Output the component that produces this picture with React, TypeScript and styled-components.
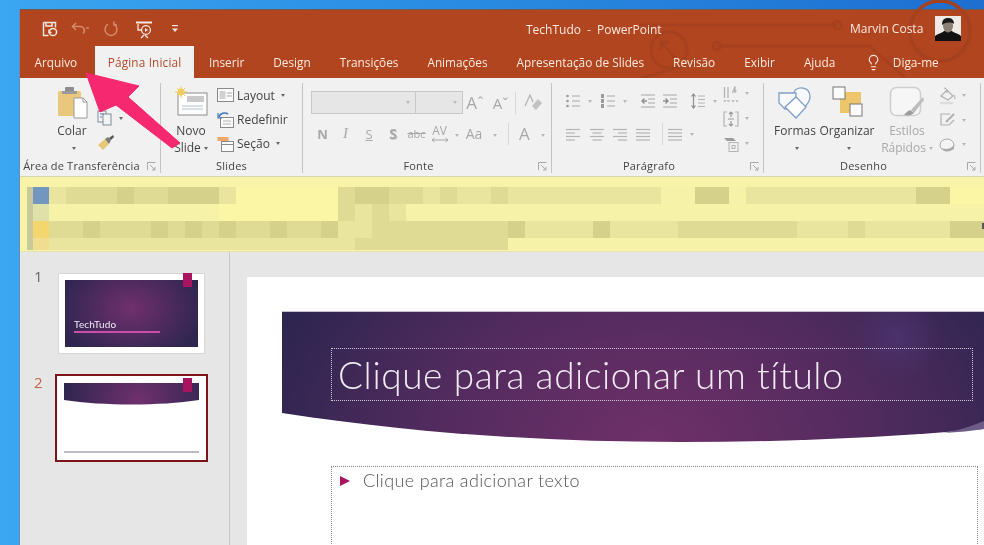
import React from 'react'
import styled, { createGlobalStyle } from 'styled-components'
import { Lightbulb } from 'lucide-react'

const GlobalStyle = createGlobalStyle`
  html, body {
    margin: 0;
    width: 984px;
    height: 545px;
    overflow: hidden;
    background: #3ba6f1;
  }
  * { box-sizing: border-box; }
`

const Desktop = styled.div`
  position: relative;
  width: 984px;
  height: 545px;
  padding: 10px 0 0 20px;
  overflow: hidden;
  background: linear-gradient(90deg, #3ba6f1 0, #2b8fe4 40%, #1e6fd0 100%);
  font-family: 'Open Sans', 'Noto Sans', sans-serif;
  filter: blur(0.5px);
`

const Window = styled.div`
  width: 964px;
  height: 535px;
  display: flex;
  flex-direction: column;
  background: #e6e6e6;
  box-shadow: 0 -1px 0 #6d5a55, -1px 0 0 #5f8fb5;
`

const Band = styled.div`
  position: relative;
  height: 68px;
  background: #b1451f;
  color: #fbe9e0;
`

const Circuit = styled.svg`
  position: absolute;
  left: -20px;
  top: -10px;
  pointer-events: none;
`

const TitleRow = styled.div`
  position: relative;
  height: 36px;
  display: flex;
  align-items: center;
  padding: 2px 0 0 22px;
`

const Qat = styled.div`
  display: flex;
  align-items: center;
  gap: 9px;
  width: 484px;
`

const WindowTitle = styled.div`
  font-size: 12px;
  word-spacing: 3px;
  width: 324px;
  white-space: nowrap;
`

const UserName = styled.div`
  font-size: 12px;
  margin-top: -2px;
  width: 85px;
  white-space: nowrap;
`

const Avatar = styled.svg`
  margin-top: -2px;
`

const TabRow = styled.div`
  position: relative;
  height: 32px;
  display: flex;
  align-items: stretch;
`

const Tab = styled.div<{ $active?: boolean }>`
  display: flex;
  align-items: center;
  justify-content: center;
  font-size: 11.8px;
  white-space: nowrap;
  padding: 0 ${p => (p.$active ? '13px' : '14.5px')};
  margin-left: ${p => (p.$active ? '3px' : '0')};
  background: ${p => (p.$active ? '#f1f1f1' : 'transparent')};
  color: ${p => (p.$active ? '#b5492a' : 'inherit')};
  letter-spacing: ${p => (p.$active ? '0.15px' : '0')};
`

const Tell = styled.div`
  display: flex;
  align-items: center;
  gap: 11px;
  font-size: 11.8px;
  margin-left: 15px;
`

const Ribbon = styled.div`
  height: 99px;
  display: flex;
  background: #f1f1f1;
  border-bottom: 1px solid #d8d5b4;
`

const Group = styled.div<{ $width: number }>`
  position: relative;
  width: ${p => p.$width}px;
  margin: 5px 0 3px;
  display: flex;
  flex-direction: column;
  border-right: 1px solid #c4c4c4;
`

const GroupBody = styled.div<{ $left: number }>`
  flex: 1;
  display: flex;
  padding-left: ${p => p.$left}px;
  min-height: 0;
`

const GroupLabel = styled.div<{ $launcher?: boolean }>`
  height: 15px;
  line-height: 15px;
  text-align: center;
  padding-right: ${p => (p.$launcher ? 17 : 0)}px;
  font-size: 11px;
  color: #444;
  letter-spacing: 0.2px;
  white-space: nowrap;
`

const Launcher = styled.svg`
  position: absolute;
  right: 4px;
  bottom: 2px;
`

const BigButton = styled.div<{ $width: number; $muted?: boolean }>`
  width: ${p => p.$width}px;
  display: flex;
  flex-direction: column;
  align-items: center;
  font-size: 12px;
  color: ${p => (p.$muted ? '#a9a9a9' : '#444')};
`

const BigIcon = styled.div`
  height: 39px;
  padding-top: 3px;
  display: flex;
  justify-content: center;
`

const BigText = styled.div`
  height: 17px;
  line-height: 17px;
  white-space: nowrap;
`

const Caret = styled.span<{ $muted?: boolean }>`
  display: inline-block;
  width: 0;
  height: 0;
  margin-left: 3px;
  vertical-align: middle;
  border-left: 2.5px solid transparent;
  border-right: 2.5px solid transparent;
  border-top: 3px solid ${p => (p.$muted ? '#b8b8b8' : '#666')};
`

const SmallColumn = styled.div<{ $top?: number; $left?: number }>`
  display: flex;
  flex-direction: column;
  margin-top: ${p => p.$top ?? 0}px;
  margin-left: ${p => p.$left ?? 0}px;
`

const SmallItem = styled.div<{ $height?: number }>`
  height: ${p => p.$height ?? 24}px;
  display: flex;
  align-items: center;
  gap: 3px;
  font-size: 12px;
  color: #444;
  white-space: nowrap;
`

const FontColumn = styled.div`
  display: flex;
  flex-direction: column;
  padding-top: 8px;
`

const FontRow = styled.div<{ $gap?: number }>`
  height: 23px;
  display: flex;
  align-items: center;
  margin-bottom: ${p => p.$gap ?? 0}px;
`

const Combo = styled.div<{ $width: number }>`
  width: ${p => p.$width}px;
  height: 23px;
  margin-right: -1px;
  background: #e6e6e6;
  border: 1px solid #c8c8c8;
  display: flex;
  align-items: center;
  justify-content: flex-end;
  padding-right: 5px;
`

const Glyph = styled.span<{
  $w: number
  $size?: number
  $bold?: boolean
  $italic?: boolean
  $under?: boolean
  $strike?: boolean
  $shadow?: boolean
}>`
  width: ${p => p.$w}px;
  flex: none;
  text-align: center;
  font-size: ${p => p.$size ?? 13}px;
  font-weight: ${p => (p.$bold ? 700 : 400)};
  font-style: ${p => (p.$italic ? 'italic' : 'normal')};
  text-decoration: ${p => (p.$under ? 'underline' : p.$strike ? 'line-through' : 'none')};
  text-shadow: ${p => (p.$shadow ? '1px 1px 0 #cfcfcf' : 'none')};
  font-family: ${p => (p.$italic ? "'Liberation Serif', serif" : 'inherit')};
  color: #a8a8a8;
  white-space: nowrap;
`

const Kerning = styled.span`
  width: 23px;
  flex: none;
  display: flex;
  flex-direction: column;
  align-items: center;
  font-size: 12px;
  line-height: 12px;
  color: #a8a8a8;
`

const Sep = styled.span<{ $w: number; $left?: number }>`
  width: ${p => p.$w}px;
  margin-left: ${p => p.$left ?? 0}px;
  flex: none;
  height: 22px;
  display: flex;
  justify-content: center;
  &::before {
    content: '';
    width: 1px;
    background: #d8d8d8;
  }
`

const ClearFormat = styled.svg`
  margin-left: 7px;
`

const ParaColumn = styled.div`
  width: 158px;
  display: flex;
  flex-direction: column;
  padding-top: 9px;
`

const ParaRow = styled.div<{ $gap?: number }>`
  height: 18px;
  display: flex;
  align-items: center;
  margin-bottom: ${p => p.$gap ?? 0}px;
`

const ParaItem = styled.div<{ $w: number }>`
  width: ${p => p.$w}px;
  flex: none;
  display: flex;
  align-items: center;
  gap: 4px;
`

const YellowBar = styled.div`
  position: relative;
  height: 75px;
  padding: 10px 0 0 7px;
  display: flex;
  background: #f8f3a6;
  border-bottom: 1px solid #e6e2b4;
`

const Strip = styled.div`
  width: 7px;
  height: 63px;
  background: #c9ca9b;
`

const Swatches = styled.div`
  width: 18px;
  display: flex;
  flex-direction: column;
`

const Swatch = styled.div<{ $color: string; $height: number }>`
  height: ${p => p.$height}px;
  background: ${p => p.$color};
`

const Mosaic = styled.div`
  display: grid;
  grid-template-columns: repeat(55, 17px);
  grid-template-rows: 17px 17px 17px 12px;
`

const EdgeMark = styled.div`
  position: absolute;
  right: 0;
  top: 46px;
  width: 2px;
  height: 6px;
  background: #555;
`

const shades: Record<string, string> = {
  a: '#fbf6a6',
  b: '#f6f2a8',
  c: '#e9e59e',
  d: '#dfdb95',
  e: '#d5d18b'
}

const Cell = styled.div<{ $shade: string }>`
  background: ${p => shades[p.$shade]};
`

const Workspace = styled.div`
  flex: 1;
  display: flex;
  min-height: 0;
`

const ThumbPane = styled.div`
  width: 210px;
  flex: none;
  padding: 21px 0 0 14px;
  display: flex;
  flex-direction: column;
  gap: 20px;
  background: #e6e6e6;
  border-right: 1px solid #c8c8c8;
`

const ThumbRow = styled.div`
  display: flex;
  align-items: flex-start;
`

const ThumbNumber = styled.div<{ $active?: boolean }>`
  width: ${p => (p.$active ? 21 : 24)}px;
  margin-top: ${p => (p.$active ? 0 : -5)}px;
  font-size: 15px;
  line-height: 16px;
  color: ${p => (p.$active ? '#c4634a' : '#666')};
`

const Thumb = styled.div`
  position: relative;
  width: 147px;
  height: 81px;
  padding: 6px;
  background: #fff;
  border: 1px solid #d6d6d6;
`

const ThumbActive = styled.div`
  position: relative;
  width: 153px;
  height: 88px;
  padding: 7px;
  background: #fff;
  border: 2px solid #7b1518;
  display: flex;
  flex-direction: column;
  justify-content: space-between;
`

const Mark = styled.div<{ $right: number; $top: number }>`
  position: absolute;
  right: ${p => p.$right}px;
  top: ${p => p.$top}px;
  width: 9px;
  height: 14px;
  background: #a8145f;
`

const TitleSlideArt = styled.div`
  height: 100%;
  padding: 39px 0 0 9px;
  background: radial-gradient(ellipse 55% 80% at 50% 42%, #70306d 0, #4c2a5e 55%, #2f2650 100%);
  color: #efe9f2;
`

const TitleSlideName = styled.div`
  font-family: Lato, sans-serif;
  font-size: 10px;
  line-height: 11px;
  letter-spacing: 0.2px;
`

const TitleSlideLine = styled.div`
  width: 86px;
  height: 2px;
  margin-top: 1px;
  background: #c94fa6;
`

const ThumbBannerArt = styled.svg`
  display: block;
`

const FooterLine = styled.div`
  height: 2px;
  background: #bdb9c0;
`

const SlideArea = styled.div`
  flex: 1;
  padding: 25px 0 0 17px;
  overflow: hidden;
  background: #e6e6e6;
`

const Slide = styled.div`
  width: 737px;
  height: 268px;
  padding: 34px 0 0 35px;
  background: #fff;
`

const Banner = styled.div`
  position: relative;
  width: 702px;
  height: 132px;
`

const BannerArt = styled.svg`
  display: block;
`

const TitlePlaceholder = styled.div`
  position: absolute;
  left: 49px;
  top: 37px;
  width: 642px;
  height: 53px;
  padding-left: 6px;
  display: flex;
  align-items: center;
  border: 1px dotted #cfc8d6;
  color: #f0ebf2;
  font-family: Lato, sans-serif;
  font-weight: 300;
  font-size: 37px;
  letter-spacing: 0.6px;
  white-space: nowrap;
`

const BodyPlaceholder = styled.div`
  width: 647px;
  height: 100px;
  margin: 23px 0 0 49px;
  padding: 3px 0 0 8px;
  display: flex;
  align-items: flex-start;
  gap: 13px;
  border: 1px dotted #8a8a8a;
  border-bottom: none;
  color: #555;
  font-family: Lato, sans-serif;
  font-size: 18px;
  line-height: 21px;
  letter-spacing: 0.35px;
  font-weight: 300;
`

const Bullet = styled.span`
  width: 0;
  height: 0;
  margin-top: 6px;
  border-top: 5.5px solid transparent;
  border-bottom: 5.5px solid transparent;
  border-left: 10px solid #a8145f;
`

const Pointer = styled.svg`
  position: absolute;
  left: 0;
  top: 0;
  pointer-events: none;
`

const ICON_GREY = '#b4b4b4'

function LinesIcon({ kind }: { kind: 'left' | 'center' | 'right' | 'justify' }) {
  const rows = [0, 1, 2, 3].map(i => {
    const short = i % 2 === 1 && kind !== 'justify'
    const w = short ? 9 : 14
    const x = kind === 'right' ? 15 - w : kind === 'center' ? 8 - w / 2 : 1
    return <line key={i} x1={x} x2={x + w} y1={3.5 + i * 3.5} y2={3.5 + i * 3.5} />
  })
  return (
    <svg width="16" height="16" stroke={ICON_GREY} strokeWidth="1.2">
      {rows}
    </svg>
  )
}

function ListIcon({ numbered }: { numbered?: boolean }) {
  return (
    <svg width="16" height="16" stroke={ICON_GREY} strokeWidth="1.2" fill="#9a9a9a">
      {[3, 8, 13].map(y => (
        <g key={y}>
          {numbered ? <rect x="1" y={y - 2} width="3" height="4" stroke="none" /> : <circle cx="2.5" cy={y} r="1.3" stroke="none" />}
          <line x1="7" x2="15" y1={y} y2={y} />
        </g>
      ))}
    </svg>
  )
}

function IndentIcon({ out }: { out?: boolean }) {
  return (
    <svg width="16" height="16" stroke={ICON_GREY} strokeWidth="1.2" fill="none">
      <line x1="1" x2="15" y1="2" y2="2" />
      <line x1="8" x2="15" y1="6" y2="6" />
      <line x1="8" x2="15" y1="10" y2="10" />
      <line x1="1" x2="15" y1="14" y2="14" />
      <path d={out ? 'M7 8H2M4.5 5.5L2 8l2.5 2.5' : 'M1 8h5M3.5 5.5L6 8l-2.5 2.5'} stroke="#8f8f8f" strokeWidth="1.4" />
    </svg>
  )
}

function SpacingIcon() {
  return (
    <svg width="16" height="18" stroke={ICON_GREY} strokeWidth="1.2" fill="none">
      <path d="M3.5 2v14M1.5 4.5l2-2.5 2 2.5M1.5 13.5l2 2.5 2-2.5" stroke="#8f8f8f" />
      <path d="M8 4h7M8 7.5h7M8 11h7M8 14.5h7" />
    </svg>
  )
}

function TextDirectionIcon() {
  return (
    <svg width="16" height="18" stroke={ICON_GREY} strokeWidth="1.3" fill="none">
      <path d="M1.5 2v11M5 2v11M12 8V1.5L9.5 8M10 6h3.5" />
      <path d="M1 15l1 2 1-2M4.5 15l1 2 1-2M9 15l1 2 1-2M13 15l1 2 1-2" strokeWidth="1" />
    </svg>
  )
}

function AlignTextIcon() {
  return (
    <svg width="16" height="18" stroke={ICON_GREY} strokeWidth="1.2" fill="none">
      <path d="M4 2H1v14h3M12 2h3v14h-3" />
      <path d="M8 2v5M6 4l2-2 2 2M8 16v-5M6 14l2 2 2-2M5 9h6" stroke="#9a9a9a" />
    </svg>
  )
}

function SmartArtIcon() {
  return (
    <svg width="16" height="18" fill="none" stroke={ICON_GREY}>
      <path d="M1 3h9l3 3H4z" fill="#9c9c9c" stroke="none" />
      <rect x="6" y="7.5" width="9" height="9" fill="#f1f1f1" />
      <rect x="9" y="10.5" width="3" height="3" />
    </svg>
  )
}

function PasteIcon() {
  return (
    <svg width="34" height="34">
      <rect x="3" y="5" width="23" height="25" rx="1.5" fill="#e9c87e" />
      <rect x="10" y="1" width="9" height="5" rx="1" fill="#8d8d8d" />
      <rect x="7" y="5" width="15" height="3" fill="#9a9a9a" />
      <path d="M19 12h9l4 4v16H19z" fill="#fff" stroke="#9a9a9a" />
      <path d="M28 12v4h4" fill="none" stroke="#9a9a9a" />
    </svg>
  )
}

function CopyIcon() {
  return (
    <svg width="16" height="16" fill="#f4f4f4" stroke="#7f8b9c">
      <rect x="1" y="1" width="8" height="11" />
      <rect x="6" y="4" width="8" height="11" />
      <path d="M3 4h4M3 7h2" stroke="#5a7ab0" />
    </svg>
  )
}

function BrushIcon() {
  return (
    <svg width="18" height="18">
      <path d="M1 12l7-6 4 5-6 6z" fill="#e8c878" />
      <path d="M8 6l3-2 3 3-2 4z" fill="#7a7a7a" />
      <path d="M12 5l4-3 1 2-3 3z" fill="#555" />
    </svg>
  )
}

function NewSlideIcon() {
  return (
    <svg width="33" height="30">
      <rect x="3" y="7" width="29" height="22" fill="#fdfdfd" stroke="#8d8d8d" />
      <rect x="12" y="10" width="17" height="6" fill="#c9c9c9" />
      <path d="M7 20h21M7 23h21" stroke="#b9c3cf" />
      <circle cx="6" cy="6" r="3.5" fill="#f2d266" />
      <path d="M6 0v12M0 6h12M2 2l8 8M10 2l-8 8" stroke="#efc95a" />
    </svg>
  )
}

function LayoutIcon() {
  return (
    <svg width="17" height="16" fill="none" stroke="#8a8a8a">
      <rect x="0.5" y="1.5" width="16" height="13" fill="#fafafa" />
      <rect x="2.5" y="4" width="6" height="8" fill="#d2d2d2" stroke="none" />
      <path d="M10 6h5M10 9h5" stroke="#a9a9a9" />
    </svg>
  )
}

function ResetIcon() {
  return (
    <svg width="17" height="17" fill="none" stroke="#8a8a8a">
      <rect x="3.5" y="6.5" width="13" height="10" fill="#fafafa" />
      <path d="M6 10h8M6 13h8" stroke="#b5b5b5" />
      <path d="M2 6c1-4 6-5 9-3" stroke="#3f79bd" strokeWidth="1.6" />
      <path d="M1 2v5h4" stroke="#3f79bd" strokeWidth="1.2" />
    </svg>
  )
}

function SectionIcon() {
  return (
    <svg width="17" height="17" fill="none">
      <rect x="0.5" y="2" width="11" height="4" fill="#f0a76a" />
      <rect x="4.5" y="6.5" width="12" height="10" fill="#fafafa" stroke="#8a8a8a" />
      <path d="M4.5 9.5h12" stroke="#8a8a8a" />
    </svg>
  )
}

function ShapesIcon() {
  return (
    <svg width="36" height="34" fill="#fdfdfd" stroke="#7f9fc4" strokeWidth="1.3">
      <path d="M17 6C20 0 33 0 33 11c0 6-6 11-10 15" fill="#f6f8fb" />
      <path d="M2 7h17v16H8l-6-6z" fill="#f6f8fb" />
      <path d="M19 11l10 10-10 11-11-11z" />
    </svg>
  )
}

function ArrangeIcon() {
  return (
    <svg width="31" height="31">
      <rect x="8" y="6" width="21" height="21" fill="#edc56b" />
      <rect x="1" y="1" width="12" height="12" fill="#fbfbfb" stroke="#777" />
      <rect x="18" y="18" width="12" height="12" fill="#fbfbfb" stroke="#777" />
    </svg>
  )
}

function QuickStyleIcon() {
  return (
    <svg width="36" height="32" fill="none">
      <rect x="1.5" y="1.5" width="30" height="28" rx="6" fill="#f6f6f6" stroke="#cfcfcf" strokeWidth="1.6" />
      <path d="M34 11L22 24l3 3 10-13z" fill="#bdbdbd" />
      <path d="M21 24c-3 1-4 3-6 5 4 1 8 0 10-2z" fill="#9d9d9d" />
    </svg>
  )
}

function FillIcon() {
  return (
    <svg width="17" height="18" fill="none" stroke="#b0b0b0" strokeWidth="1.2">
      <path d="M2 9l6-6 6 6-5 4z" />
      <path d="M5 1c2 0 3 2 3 5" />
      <path d="M15 8c1 2 1.5 3 .5 4" stroke="#c6c6c6" strokeWidth="1.6" />
      <path d="M1 16h13" stroke="#dcdcdc" strokeWidth="2.5" />
    </svg>
  )
}

function OutlineIcon() {
  return (
    <svg width="17" height="16" fill="none" stroke="#b0b0b0" strokeWidth="1.2">
      <path d="M11 2H2v11h8l5-5" />
      <path d="M7 10l8-8" strokeWidth="2" />
    </svg>
  )
}

function EffectIcon() {
  return (
    <svg width="17" height="14">
      <ellipse cx="8" cy="7" rx="7" ry="6" fill="#f4f4f4" stroke="#a9a9a9" />
      <path d="M3 10c4 2 9 1 12-3v4l-4 2H6z" fill="#a9a9a9" />
    </svg>
  )
}

function LauncherMark() {
  return (
    <Launcher width="9" height="9" fill="none" stroke="#a8a8a8">
      <path d="M0.5 8V0.5H8.5" />
      <path d="M3 3l5 5M5 8h3V5" />
    </Launcher>
  )
}

function QatIcons() {
  return (
    <Qat>
      <svg width="16" height="16" fill="none" stroke="#f7e6de" strokeWidth="1.5">
        <path d="M1.5 1.5h12v5M1.5 1.5v13h5" />
        <path d="M4 2v3h6V2" />
        <circle cx="11" cy="11" r="3.6" />
        <path d="M7 8.5v3h2.5" />
      </svg>
      <svg width="18" height="14" fill="none" stroke="#d38a6e" strokeWidth="1.5" style={{ marginLeft: 4 }}>
        <path d="M5 1L1.5 4.5 5 8M2 4.5h7a4 4 0 0 1 3 7" />
        <path d="M15 6h3" />
      </svg>
      <svg width="16" height="16" fill="none" stroke="#d38a6e" strokeWidth="1.5" style={{ marginLeft: 5 }}>
        <path d="M11 3.2a6 6 0 1 1-6 0" />
        <path d="M11 0.5v3.5h3" />
      </svg>
      <svg width="19" height="19" fill="none" stroke="#f7e6de" strokeWidth="1.3" style={{ marginLeft: 7 }}>
        <path d="M1 2.5h16" strokeWidth="2" />
        <path d="M3 4v6h4M9 15l-3 3M10 15l3 3" />
        <circle cx="11" cy="10" r="4.4" />
        <path d="M10 8l3 2-3 2z" fill="#f7e6de" stroke="none" />
      </svg>
      <svg width="7" height="8" fill="#f7e6de" style={{ marginLeft: 9 }}>
        <rect x="0" y="0" width="6" height="1.2" />
        <path d="M0 3.5h6L3 7z" />
      </svg>
    </Qat>
  )
}

const mosaicRows = [
  'cdddeddeeecaaaaaadeeddcdccdcccccccccbbeebcccccccccceeaaaa',
  'bbbbbbbbbbaaaaaaadcdcbbbbbbbbbbbbbbbbbbbbbbbbbbbbbbbbbbb',
  'ddedddedededdeddeccddddddddecccceccccdddddddcccdccccceeec',
  'ccccccccccccccccccdddddddddbbbbbbbbbbbbbbbbbbbbbbbbbbbbb'
]

const tabs = ['Inserir', 'Design', 'Transições', 'Animações', 'Apresentação de Slides', 'Revisão', 'Exibir', 'Ajuda']

export default function App() {
  return (
    <Desktop>
      <GlobalStyle />
      <Window>
        <Band>
          <Circuit width="984" height="78" fill="none" stroke="#a5411e" strokeWidth="2.5">
            <path d="M640 25H837M717 46H870L905 78M690 65L640 78" />
            <circle cx="837" cy="25" r="4" />
            <circle cx="717" cy="46" r="4" />
            <circle cx="669" cy="50" r="18" strokeWidth="3" />
            <path d="M675 58L661 42M661 50v-8h8" />
            <circle cx="940" cy="31" r="30" strokeWidth="3.5" />
          </Circuit>
          <TitleRow>
            <QatIcons />
            <WindowTitle>TechTudo - PowerPoint</WindowTitle>
            <UserName>Marvin Costa</UserName>
            <Avatar width="26" height="25">
              <rect width="26" height="25" fill="#eeeae6" />
              <path d="M0 25v-5c4-3 7-3 9-5h8c2 2 6 2 9 5v5z" fill="#111" />
              <ellipse cx="13" cy="10" rx="5" ry="6.5" fill="#8c7f76" />
              <path d="M7 9c0-6 3-7 6-7s6 1 6 6c-3-2-8-2-12 1z" fill="#1a1a1a" />
            </Avatar>
          </TitleRow>
          <TabRow>
            <Tab>Arquivo</Tab>
            <Tab $active>Página Inicial</Tab>
            {tabs.map(name => (
              <Tab key={name}>{name}</Tab>
            ))}
            <Tell>
              <Lightbulb size={17} strokeWidth={1.6} />
              Diga-me
            </Tell>
          </TabRow>
        </Band>

        <Ribbon>
          <Group $width={141}>
            <GroupBody $left={32}>
              <BigButton $width={40}>
                <BigIcon>
                  <PasteIcon />
                </BigIcon>
                <BigText>Colar</BigText>
                <BigText>
                  <Caret />
                </BigText>
              </BigButton>
              <SmallColumn $top={23} $left={5}>
                <SmallItem>
                  <CopyIcon />
                  <Caret />
                </SmallItem>
                <SmallItem>
                  <BrushIcon />
                </SmallItem>
              </SmallColumn>
            </GroupBody>
            <GroupLabel $launcher>Área de Transferência</GroupLabel>
            <LauncherMark />
          </Group>

          <Group $width={142}>
            <GroupBody $left={7}>
              <BigButton $width={46}>
                <BigIcon>
                  <NewSlideIcon />
                </BigIcon>
                <BigText>Novo</BigText>
                <BigText>
                  Slide
                  <Caret />
                </BigText>
              </BigButton>
              <SmallColumn $left={3}>
                <SmallItem>
                  <LayoutIcon />
                  Layout
                  <Caret />
                </SmallItem>
                <SmallItem>
                  <ResetIcon />
                  Redefinir
                </SmallItem>
                <SmallItem>
                  <SectionIcon />
                  Seção
                  <Caret />
                </SmallItem>
              </SmallColumn>
            </GroupBody>
            <GroupLabel>Slides</GroupLabel>
          </Group>

          <Group $width={249}>
            <GroupBody $left={8}>
              <FontColumn>
                <FontRow $gap={8}>
                  <Combo $width={105}>
                    <Caret $muted />
                  </Combo>
                  <Combo $width={48}>
                    <Caret $muted />
                  </Combo>
                  <Glyph $w={26} $size={17}>
                    Aˆ
                  </Glyph>
                  <Glyph $w={25} $size={15}>
                    Aˇ
                  </Glyph>
                  <Sep $w={1} $left={2} />
                  <ClearFormat width="20" height="20" fill="none">
                    <path d="M2 13L7 2l3 7" stroke="#b4b4b4" strokeWidth="1.3" />
                    <path d="M9 13l6-7 4 4-6 7z" fill="#c2c2c2" />
                  </ClearFormat>
                </FontRow>
                <FontRow>
                  <Glyph $w={23} $bold>
                    N
                  </Glyph>
                  <Glyph $w={23} $italic $size={15}>
                    I
                  </Glyph>
                  <Glyph $w={24} $under>
                    S
                  </Glyph>
                  <Glyph $w={24} $bold $size={14} $shadow>
                    S
                  </Glyph>
                  <Glyph $w={23} $size={11} $strike>
                    abc
                  </Glyph>
                  <Kerning>
                    AV
                    <svg width="18" height="6" fill="none" stroke="#a8a8a8">
                      <path d="M1 3h16M3.5 1L1 3l2.5 2M14.5 1L17 3l-2.5 2" />
                    </svg>
                  </Kerning>
                  <Glyph $w={8}>
                    <Caret $muted />
                  </Glyph>
                  <Glyph $w={30} $size={14}>
                    Aa
                  </Glyph>
                  <Glyph $w={8}>
                    <Caret $muted />
                  </Glyph>
                  <Sep $w={22} />
                  <Glyph $w={10} $size={17}>
                    A
                  </Glyph>
                  <Glyph $w={24}>
                    <Caret $muted />
                  </Glyph>
                </FontRow>
              </FontColumn>
            </GroupBody>
            <GroupLabel $launcher>Fonte</GroupLabel>
            <LauncherMark />
          </Group>

          <Group $width={212}>
            <GroupBody $left={13}>
              <ParaColumn>
                <ParaRow $gap={15}>
                  <ParaItem $w={35}>
                    <ListIcon />
                    <Caret $muted />
                  </ParaItem>
                  <ParaItem $w={40}>
                    <ListIcon numbered />
                    <Caret $muted />
                  </ParaItem>
                  <ParaItem $w={22}>
                    <IndentIcon out />
                  </ParaItem>
                  <ParaItem $w={28}>
                    <IndentIcon />
                  </ParaItem>
                  <ParaItem $w={33}>
                    <SpacingIcon />
                    <Caret $muted />
                  </ParaItem>
                </ParaRow>
                <ParaRow>
                  <ParaItem $w={24}>
                    <LinesIcon kind="left" />
                  </ParaItem>
                  <ParaItem $w={23}>
                    <LinesIcon kind="center" />
                  </ParaItem>
                  <ParaItem $w={23}>
                    <LinesIcon kind="right" />
                  </ParaItem>
                  <ParaItem $w={22}>
                    <LinesIcon kind="justify" />
                  </ParaItem>
                  <Sep $w={10} />
                  <ParaItem $w={30}>
                    <LinesIcon kind="justify" />
                    <Caret $muted />
                  </ParaItem>
                </ParaRow>
              </ParaColumn>
              <SmallColumn $top={-2}>
                <SmallItem $height={25}>
                  <TextDirectionIcon />
                  <Caret $muted />
                </SmallItem>
                <SmallItem $height={25}>
                  <AlignTextIcon />
                  <Caret $muted />
                </SmallItem>
                <SmallItem $height={25}>
                  <SmartArtIcon />
                  <Caret $muted />
                </SmallItem>
              </SmallColumn>
            </GroupBody>
            <GroupLabel $launcher>Parágrafo</GroupLabel>
            <LauncherMark />
          </Group>

          <Group $width={217}>
            <GroupBody $left={9}>
              <BigButton $width={44}>
                <BigIcon>
                  <ShapesIcon />
                </BigIcon>
                <BigText>Formas</BigText>
                <BigText>
                  <Caret />
                </BigText>
              </BigButton>
              <BigButton $width={60}>
                <BigIcon>
                  <ArrangeIcon />
                </BigIcon>
                <BigText>Organizar</BigText>
                <BigText>
                  <Caret />
                </BigText>
              </BigButton>
              <BigButton $width={60} $muted>
                <BigIcon>
                  <QuickStyleIcon />
                </BigIcon>
                <BigText>Estilos</BigText>
                <BigText>
                  Rápidos
                  <Caret $muted />
                </BigText>
              </BigButton>
              <SmallColumn $left={2}>
                <SmallItem $height={25}>
                  <FillIcon />
                  <Caret $muted />
                </SmallItem>
                <SmallItem $height={24}>
                  <OutlineIcon />
                  <Caret $muted />
                </SmallItem>
                <SmallItem $height={25}>
                  <EffectIcon />
                  <Caret $muted />
                </SmallItem>
              </SmallColumn>
            </GroupBody>
            <GroupLabel $launcher>Desenho</GroupLabel>
            <LauncherMark />
          </Group>
        </Ribbon>

        <YellowBar>
          <Strip />
          <Swatches>
            <Swatch $color="#7396c0" $height={17} />
            <Swatch $color="#dfe2a8" $height={17} />
            <Swatch $color="#f3d66e" $height={17} />
            <Swatch $color="#f0dd90" $height={12} />
          </Swatches>
          <Mosaic>
            {mosaicRows.map((row, r) =>
              row
                .slice(0, 55)
                .split('')
                .map((shade, c) => <Cell key={`${r}-${c}`} $shade={shade} />)
            )}
          </Mosaic>
          <EdgeMark />
        </YellowBar>

        <Workspace>
          <ThumbPane>
            <ThumbRow>
              <ThumbNumber>1</ThumbNumber>
              <Thumb>
                <TitleSlideArt>
                  <TitleSlideName>TechTudo</TitleSlideName>
                  <TitleSlideLine />
                </TitleSlideArt>
                <Mark $right={12} $top={-1} />
              </Thumb>
            </ThumbRow>
            <ThumbRow>
              <ThumbNumber $active>2</ThumbNumber>
              <ThumbActive>
                <ThumbBannerArt width="135" height="22">
                  <defs>
                    <radialGradient id="thumbBanner" gradientUnits="userSpaceOnUse" cx="75" cy="18" r="75">
                      <stop offset="0" stopColor="#70306d" />
                      <stop offset="1" stopColor="#2f2650" />
                    </radialGradient>
                  </defs>
                  <path d="M0 0H135V17C95 23 40 23 0 17z" fill="url(#thumbBanner)" />
                </ThumbBannerArt>
                <FooterLine />
                <Mark $right={14} $top={2} />
              </ThumbActive>
            </ThumbRow>
          </ThumbPane>
          <SlideArea>
            <Slide>
              <Banner>
                <BannerArt width="702" height="132">
                  <defs>
                    <radialGradient id="bannerFill" gradientUnits="userSpaceOnUse" cx="370" cy="135" r="400" gradientTransform="translate(0 40) scale(1 0.7)">
                      <stop offset="0" stopColor="#6f3069" />
                      <stop offset="0.55" stopColor="#522b5e" />
                      <stop offset="1" stopColor="#2e2550" />
                    </radialGradient>
                    <radialGradient id="bannerGlow" gradientUnits="userSpaceOnUse" cx="615" cy="25" r="45">
                      <stop offset="0" stopColor="#4b3470" stopOpacity="0.8" />
                      <stop offset="1" stopColor="#4b3470" stopOpacity="0" />
                    </radialGradient>
                  </defs>
                  <path d="M0 1H702V118C600 127 500 131 398 131C260 131 130 122 0 102z" fill="url(#bannerFill)" />
                  <path d="M0 1H702V118C600 127 500 131 398 131C260 131 130 122 0 102z" fill="url(#bannerGlow)" />
                  <path d="M662 122C678 119 690 115 702 110V118C690 120 676 121 662 122z" fill="#6e5c88" />
                  <path d="M0 0.5H702" stroke="#c9bdd0" />
                </BannerArt>
                <TitlePlaceholder>Clique para adicionar um título</TitlePlaceholder>
              </Banner>
              <BodyPlaceholder>
                <Bullet />
                Clique para adicionar texto
              </BodyPlaceholder>
            </Slide>
          </SlideArea>
        </Workspace>
      </Window>
      <Pointer width="984" height="545">
        <path d="M86 73L139 86L128 97L180 143L172 148L116 105L100 112z" fill="#f6286f" stroke="#f6286f" strokeLinejoin="round" />
      </Pointer>
    </Desktop>
  )
}
